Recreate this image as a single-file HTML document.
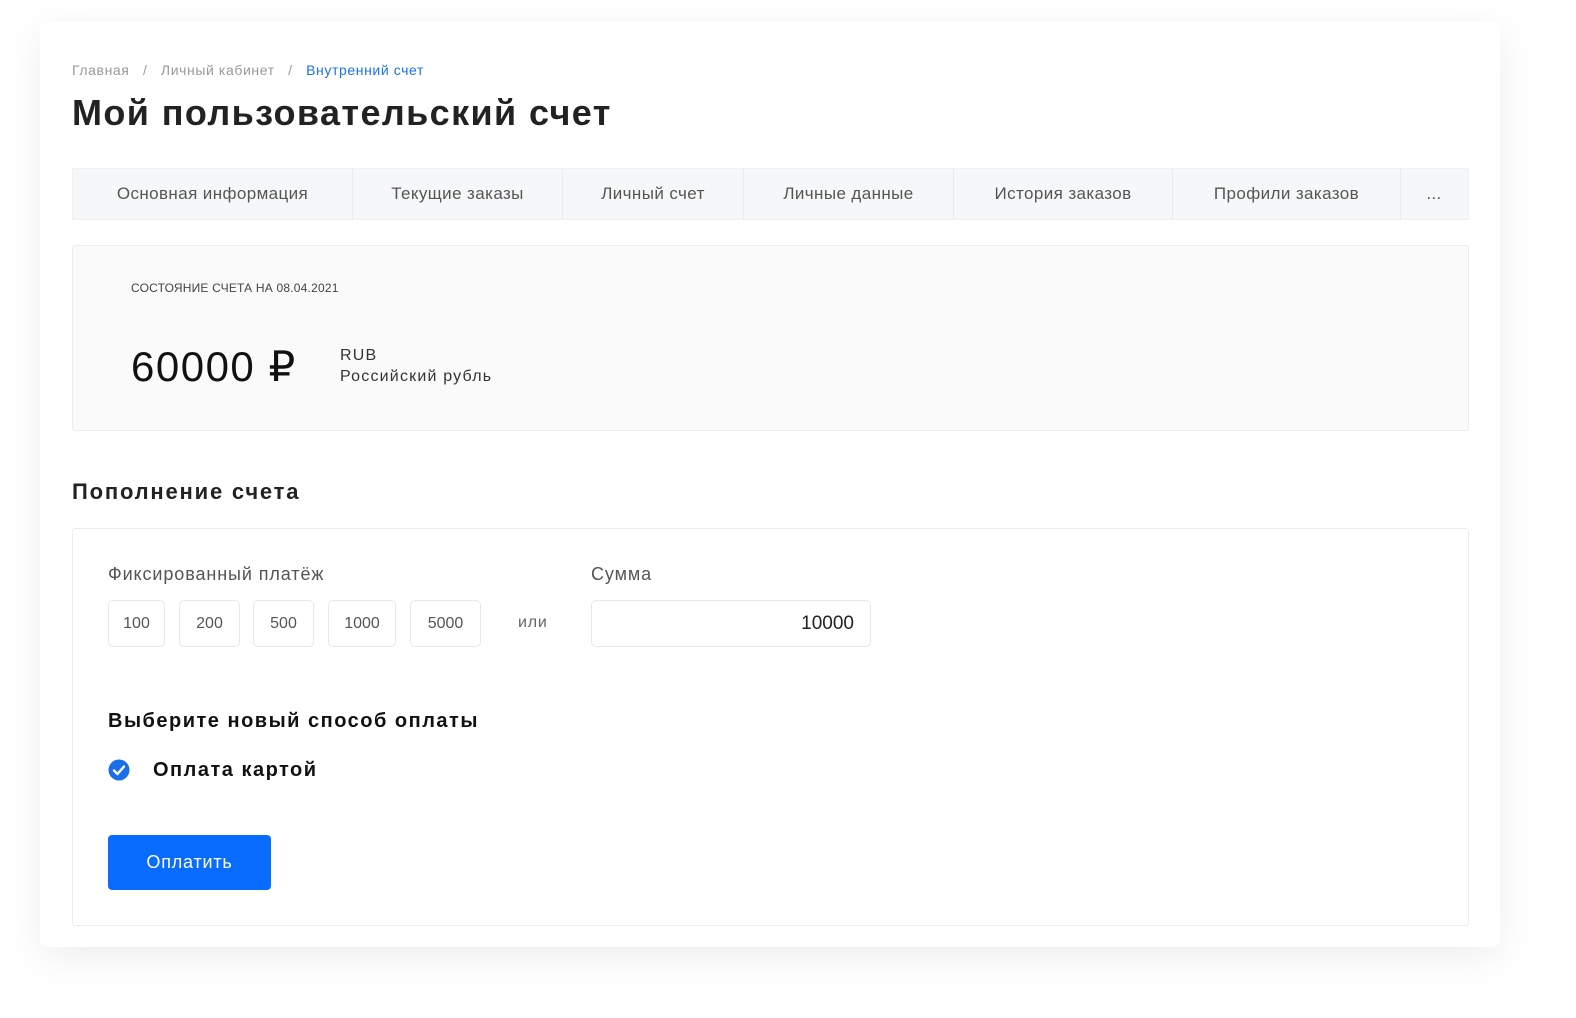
<!DOCTYPE html><html><head><meta charset="utf-8"><style>
*{margin:0;padding:0;box-sizing:border-box}
body{width:1576px;height:1018px;background:#fff;font-family:"Liberation Sans",sans-serif;position:relative;overflow:hidden;color:#333}
.a{position:absolute;white-space:nowrap}
.card{position:absolute;left:40px;top:22px;width:1460px;height:925px;background:#fff;border-radius:8px;box-shadow:0 10px 40px rgba(0,0,0,0.07)}
.tabs{position:absolute;left:72px;top:168px;width:1397px;height:52px;background:#f6f7f8;border:1px solid #eef0f2}
.tab{position:absolute;top:0;height:50px;line-height:50px;font-size:17px;color:#555;text-align:center;border-right:1px solid #e8eaec;letter-spacing:.4px}
.btn{position:absolute;top:600px;height:47px;border:1px solid #e8e8e8;border-radius:5px;font-size:16px;color:#555;text-align:center;line-height:45px}
</style></head><body>
<div class="card"></div>
<div class="a" style="left:72px;top:62px;font-size:14px;color:#999;letter-spacing:.6px">Главная &nbsp;&nbsp;/&nbsp;&nbsp; Личный кабинет &nbsp;&nbsp;/&nbsp;&nbsp; <span style="color:#1a73e8">Внутренний счет</span></div>
<div class="a" style="left:72px;top:92px;font-size:36px;font-weight:bold;color:#222;letter-spacing:1.4px">Мой пользовательский счет</div>
<div class="tabs">
<div class="tab" style="left:0;width:280px">Основная информация</div>
<div class="tab" style="left:280px;width:210px">Текущие заказы</div>
<div class="tab" style="left:490px;width:181px">Личный счет</div>
<div class="tab" style="left:671px;width:210px">Личные данные</div>
<div class="tab" style="left:881px;width:219px">История заказов</div>
<div class="tab" style="left:1100px;width:228px">Профили заказов</div>
<div class="tab" style="left:1328px;width:66px;border:none">...</div>
</div>
<div class="a" style="left:72px;top:245px;width:1397px;height:186px;background:#fafafa;border:1px solid #ececec;border-radius:3px"></div>
<div class="a" style="left:131px;top:281px;font-size:12px;color:#444;letter-spacing:.2px">СОСТОЯНИЕ СЧЕТА НА 08.04.2021</div>
<div class="a" style="left:131px;top:342px;font-size:42px;color:#111;letter-spacing:1.5px">60000 ₽</div>
<div class="a" style="left:340px;top:345px;font-size:16px;color:#333;line-height:21px;letter-spacing:1.2px">RUB<br>Российский рубль</div>
<div class="a" style="left:72px;top:479px;font-size:22px;font-weight:bold;color:#222;letter-spacing:1.8px">Пополнение счета</div>
<div class="a" style="left:72px;top:528px;width:1397px;height:398px;border:1px solid #ececec;border-radius:3px"></div>
<div class="a" style="left:108px;top:564px;font-size:18px;color:#555;letter-spacing:.9px">Фиксированный платёж</div>
<div class="a" style="left:591px;top:564px;font-size:18px;color:#555;letter-spacing:.9px">Сумма</div>
<div class="btn" style="left:108px;width:57px">100</div>
<div class="btn" style="left:179px;width:61px">200</div>
<div class="btn" style="left:253px;width:61px">500</div>
<div class="btn" style="left:328px;width:68px">1000</div>
<div class="btn" style="left:410px;width:71px">5000</div>
<div class="a" style="left:518px;top:614px;font-size:16px;color:#666;letter-spacing:.8px">или</div>
<div class="btn" style="left:591px;width:280px;text-align:right;padding-right:16px;font-size:19px;color:#222">10000</div>
<div class="a" style="left:108px;top:710px;font-size:20px;font-weight:bold;color:#111;letter-spacing:1.5px">Выберите новый способ оплаты</div>
<svg class="a" style="left:108px;top:759px" width="22" height="22" viewBox="0 0 22 22"><circle cx="11" cy="11" r="10.5" fill="#1a6fe8"/><path d="M6 11.5l3.5 3.5L16 7.5" stroke="#fff" stroke-width="2.4" fill="none" stroke-linecap="round" stroke-linejoin="round"/></svg>
<div class="a" style="left:153px;top:759px;font-size:20px;font-weight:bold;color:#111;letter-spacing:1.5px">Оплата картой</div>
<div class="a" style="left:108px;top:835px;width:163px;height:55px;background:#0a6cff;border-radius:4px;color:#fff;font-size:18px;text-align:center;line-height:55px;letter-spacing:.8px">Оплатить</div>
</body></html>
